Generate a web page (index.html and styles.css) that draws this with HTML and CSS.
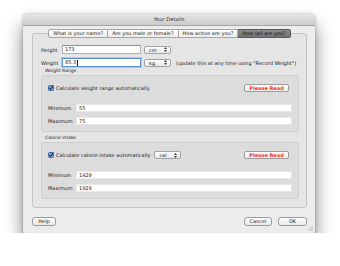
FILE: index.html
```html
<!DOCTYPE html>
<html lang="en">
<head>
    <meta charset="UTF-8">
    <title>Your Details</title>
    <link rel="stylesheet" href="styles.css">
</head>
<body>
    <div class="window">
        <div class="titlebar">Your Details</div>
        <div class="content">
            <div class="tabs">
                <span class="tab">What is your name?</span>
                <span class="tab">Are you male or female?</span>
                <span class="tab">How active are you?</span>
                <span class="tab selected">How tall are you?</span>
            </div>
            <div class="tabbox">
                <div class="fields">
                    <div class="field-row">
                        <span class="field-label">Height</span>
                        <div class="input">173</div>
                        <div class="select">cm <svg class="arrows" width="3" height="5" viewBox="0 0 3 5"><path d="M1.5 0 L3 2 L0 2 Z M1.5 5 L3 3 L0 3 Z" fill="#333"/></svg></div>
                    </div>
                    <div class="field-row">
                        <span class="field-label">Weight</span>
                        <div class="input focused">85.3<span class="caret"></span></div>
                        <div class="select">kg <svg class="arrows" width="3" height="5" viewBox="0 0 3 5"><path d="M1.5 0 L3 2 L0 2 Z M1.5 5 L3 3 L0 3 Z" fill="#333"/></svg></div>
                        <span class="note">(update this at any time using "Record Weight")</span>
                    </div>
                </div>

                <div class="group-title">Weight Range</div>
                <div class="group">
                    <div class="check-row">
                        <svg class="checkbox" width="6" height="6" viewBox="0 0 6 6"><rect x="0.5" y="0.5" width="5" height="5" rx="1" fill="#6d9fe0" stroke="#3d6cae"/><path d="M1.3 3 L2.5 4.4 L5.2 0.6" fill="none" stroke="#1a1a1a" stroke-width="1"/></svg>
                        <span>Calculate weight range automatically</span>
                        <span class="read-btn">Please Read</span>
                    </div>
                    <div class="range-row">
                        <span class="range-label">Minimum</span>
                        <div class="input wide">55</div>
                    </div>
                    <div class="range-row">
                        <span class="range-label">Maximum</span>
                        <div class="input wide">75</div>
                    </div>
                </div>

                <div class="group-title second">Calorie Intake</div>
                <div class="group">
                    <div class="check-row">
                        <svg class="checkbox" width="6" height="6" viewBox="0 0 6 6"><rect x="0.5" y="0.5" width="5" height="5" rx="1" fill="#6d9fe0" stroke="#3d6cae"/><path d="M1.3 3 L2.5 4.4 L5.2 0.6" fill="none" stroke="#1a1a1a" stroke-width="1"/></svg>
                        <span>Calculate calorie intake automatically</span>
                        <div class="select unit">cal <svg class="arrows" width="3" height="5" viewBox="0 0 3 5"><path d="M1.5 0 L3 2 L0 2 Z M1.5 5 L3 3 L0 3 Z" fill="#333"/></svg></div>
                        <span class="read-btn">Please Read</span>
                    </div>
                    <div class="range-row">
                        <span class="range-label">Minimum</span>
                        <div class="input wide">1429</div>
                    </div>
                    <div class="range-row">
                        <span class="range-label">Maximum</span>
                        <div class="input wide">1929</div>
                    </div>
                </div>
            </div>

            <div class="footer">
                <span class="button help">Help</span>
                <span class="button cancel">Cancel</span>
                <span class="button ok">OK</span>
            </div>
        </div>
        <svg class="grip" width="5" height="5" viewBox="0 0 5 5"><path d="M5 0 L0 5 M5 2 L2 5 M5 4 L4 5" stroke="#9a9a9a" stroke-width="0.6"/></svg>
    </div>
</body>
</html>
```

FILE: styles.css
```css
body {
    margin: 0;
    background: #fff;
    font-family: "DejaVu Sans", sans-serif;
    font-size: 5px;
    color: #222;
}
.window {
    position: relative;
    width: 292px;
    height: 219px;
    margin: 14px 0 0 23px;
    background: #ececec;
    border-radius: 4px 4px 2px 2px;
    box-shadow: 0 12px 18px rgba(0, 0, 0, 0.5), 0 0 3px rgba(0, 0, 0, 0.3);
    display: flex;
    flex-direction: column;
}
.titlebar {
    height: 11px;
    line-height: 11px;
    text-align: center;
    background: linear-gradient(#e6e6e6, #cbcbcb);
    border-bottom: 1px solid #a6a6a6;
    border-radius: 4px 4px 0 0;
    font-size: 5.2px;
    color: #333;
}
.content {
    flex: 1;
    padding: 3px 8px 0 9px;
    display: flex;
    flex-direction: column;
}
.tabs {
    display: flex;
    justify-content: center;
    height: 9px;
    margin-bottom: -5px;
    position: relative;
    z-index: 1;
}
.tab {
    height: 9px;
    box-sizing: border-box;
    padding: 0 4px;
    line-height: 7px;
    white-space: nowrap;
    background: linear-gradient(#ffffff, #ebebeb);
    border: 1px solid #a5a5a5;
    border-left: none;
}
.tab:first-child {
    border-left: 1px solid #a5a5a5;
    border-radius: 2px 0 0 2px;
}
.tab:last-child {
    border-radius: 0 2px 2px 0;
}
.tab.selected {
    background: linear-gradient(#8c8c8c, #717171);
    border-color: #5a5a5a;
    color: #111;
}
.tabbox {
    height: 175px;
    box-sizing: border-box;
    border: 1px solid #c4c4c4;
    border-radius: 3px;
    background: #e5e5e5;
    padding: 11px 7px 0 8px;
}
.fields {
    display: flex;
    flex-direction: column;
    gap: 4px;
}
.field-row {
    display: flex;
    align-items: center;
    height: 9px;
}
.field-label {
    width: 21px;
}
.input {
    width: 79px;
    height: 9px;
    box-sizing: border-box;
    background: #fff;
    border: 1px solid #b0b0b0;
    border-top-color: #8e8e8e;
    padding: 0 2px;
    line-height: 7px;
    display: flex;
    align-items: center;
}
.input.focused {
    border-color: #5b8fd6;
    box-shadow: 0 0 0 1px #a8c8f0;
}
.caret {
    width: 0.6px;
    height: 6px;
    background: #111;
    margin-left: 0.5px;
}
.select {
    margin-left: 3px;
    width: 27px;
    height: 8px;
    box-sizing: border-box;
    padding: 0 3px 0 4px;
    background: linear-gradient(#ffffff, #e8e8e8);
    border: 1px solid #a3a3a3;
    border-radius: 2px;
    display: flex;
    justify-content: space-between;
    align-items: center;
}
.note {
    margin-left: 5px;
    white-space: nowrap;
}
.group-title {
    height: 8px;
    line-height: 8px;
    padding-left: 4px;
    font-size: 4.5px;
}
.group-title.second {
    height: 10px;
    line-height: 12px;
}
.group {
    height: 57px;
    box-sizing: border-box;
    background: #dcdcdc;
    border: 1px solid #cdcdcd;
    border-radius: 3px;
    padding: 8px 6px 0 6px;
}
.check-row {
    display: flex;
    align-items: center;
    height: 8px;
    margin-bottom: 12px;
    white-space: nowrap;
}
.checkbox {
    margin-right: 2px;
}
.select.unit {
    margin-left: 4px;
}
.read-btn {
    margin-left: auto;
    margin-right: 3px;
    width: 45px;
    height: 8px;
    box-sizing: border-box;
    text-align: center;
    line-height: 6px;
    background: linear-gradient(#ffffff, #ececec);
    border: 1px solid #9c9c9c;
    border-radius: 2px;
    color: #ee3a2c;
    font-weight: bold;
}
.range-row {
    display: flex;
    align-items: center;
    height: 8px;
    margin-bottom: 5px;
}
.range-label {
    width: 28px;
}
.input.wide {
    flex: 1;
    height: 8px;
    border-color: #e8e8e8;
}
.footer {
    display: flex;
    align-items: center;
    margin-top: 9px;
}
.button {
    height: 9px;
    box-sizing: border-box;
    line-height: 7px;
    text-align: center;
    background: linear-gradient(#ffffff, #e9e9e9);
    border: 1px solid #9a9a9a;
    border-radius: 3px;
}
.help {
    width: 24px;
}
.cancel {
    width: 28px;
    margin-left: auto;
}
.ok {
    width: 29px;
    margin-left: 6px;
}
.grip {
    position: absolute;
    right: 2px;
    bottom: 2px;
}
```
